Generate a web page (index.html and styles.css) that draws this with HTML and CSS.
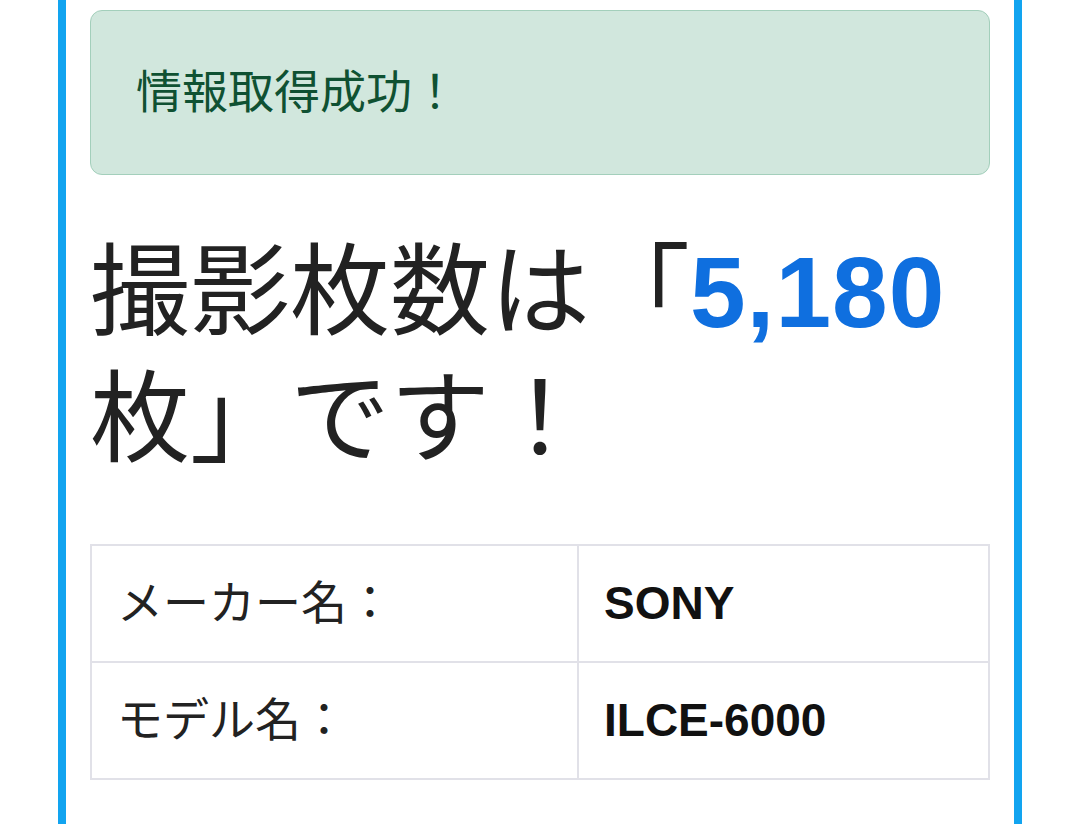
FILE: index.html
```html
<!DOCTYPE html>
<html lang="ja">
<head>
    <meta charset="UTF-8">
    <meta name="viewport" content="width=device-width, initial-scale=1.0">
    <title>撮影枚数チェッカー</title>
    <link rel="stylesheet" href="styles.css">
</head>
<body>
    <div class="contenedor">
        <div class="alerta-exito">情報取得成功！</div>

        <h2 class="resultado">撮影枚数は「<span class="cantidad">5,180</span>枚」です！</h2>

        <table class="tabla-info">
            <tr>
                <td class="etiqueta">メーカー名：</td>
                <td class="valor">SONY</td>
            </tr>
            <tr>
                <td class="etiqueta">モデル名：</td>
                <td class="valor">ILCE-6000</td>
            </tr>
        </table>
    </div>
</body>
</html>
```

FILE: styles.css
```css
body {
    margin: 0;
    background-color: #fff;
    font-family: "Liberation Sans", "Noto Sans CJK JP", sans-serif;
    color: #222;
    font-size: 46px;
}
.contenedor {
    box-sizing: border-box;
    width: 964px;
    min-height: 100vh;
    margin-left: 58px;
    padding: 10px 24px 24px;
    border-left: 8px solid #12a4f0;
    border-right: 8px solid #12a4f0;
}
.alerta-exito {
    background-color: #d1e7dd;
    border: 1px solid #a3cfbb;
    border-radius: 12px;
    color: #0f5132;
    padding: 47px 45px;
    line-height: 69px;
}
.resultado {
    font-size: 100px;
    font-weight: normal;
    line-height: 127px;
    margin: 54px 0 61px;
    color: #222;
}
.cantidad {
    color: #0f6fdf;
    font-weight: bold;
    letter-spacing: 1px;
}
.tabla-info {
    width: 100%;
    border-collapse: collapse;
}
.tabla-info td {
    border: 2px solid #e1e1e8;
    padding: 23px 25px;
    line-height: 69px;
}
.etiqueta {
    width: 435px;
    color: #222;
}
.valor {
    font-weight: bold;
    color: #111;
}
```
